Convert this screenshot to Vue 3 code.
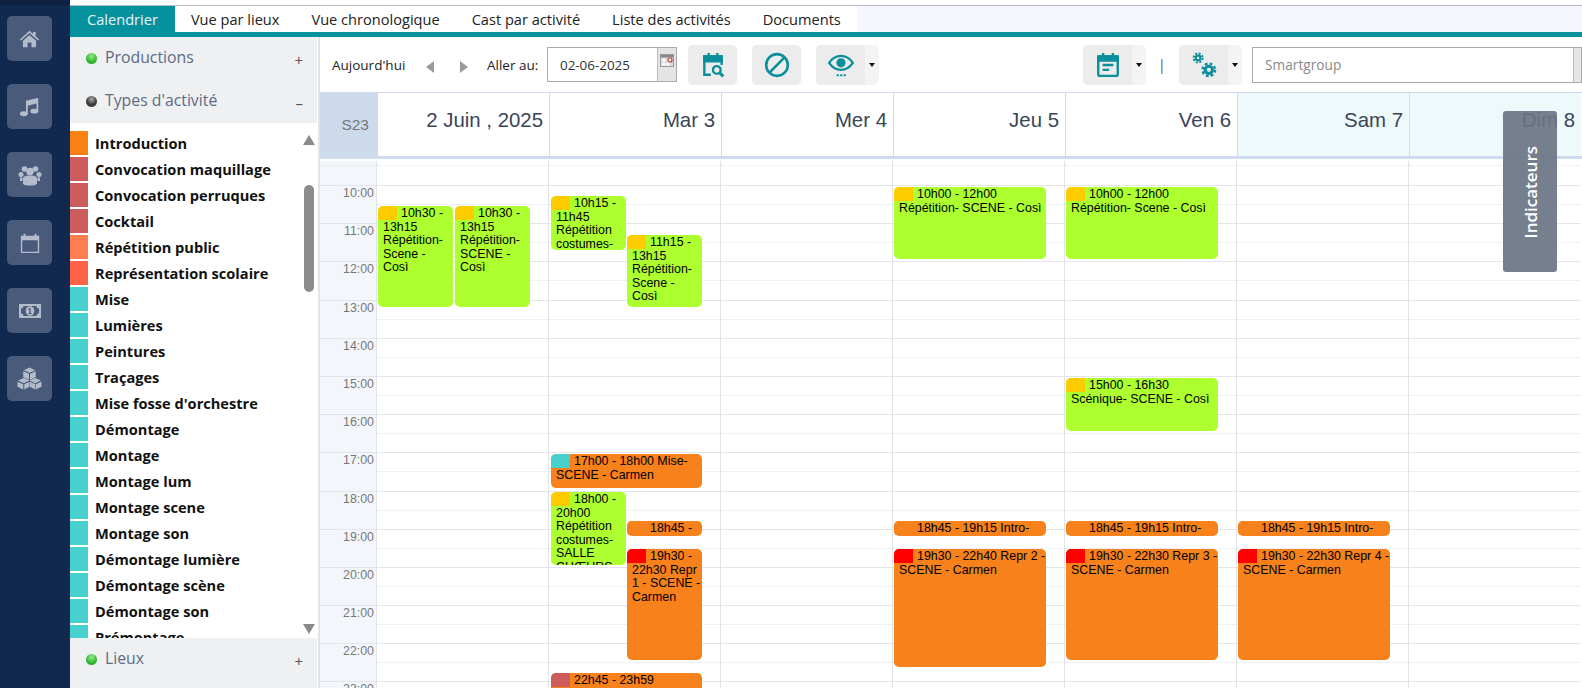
<script setup>
const navItems = ['home', 'music', 'users', 'calendar', 'money', 'cubes']
const types = [
  ['Introduction', '#f98012'], ['Convocation maquillage', '#cd5c5c'], ['Convocation perruques', '#cd5c5c'],
  ['Cocktail', '#cd5c5c'], ['Répétition public', '#ff7f50'], ['Représentation scolaire', '#ff6347'],
  ['Mise', '#48d1cc'], ['Lumières', '#48d1cc'], ['Peintures', '#48d1cc'], ['Traçages', '#48d1cc'],
  ["Mise fosse d'orchestre", '#48d1cc'], ['Démontage', '#48d1cc'], ['Montage', '#48d1cc'], ['Montage lum', '#48d1cc'],
  ['Montage scene', '#48d1cc'], ['Montage son', '#48d1cc'], ['Démontage lumière', '#48d1cc'],
  ['Démontage scène', '#48d1cc'], ['Démontage son', '#48d1cc'], ['Prémontage', '#48d1cc']
]
const tabs = ['Calendrier', 'Vue par lieux', 'Vue chronologique', 'Cast par activité', 'Liste des activités', 'Documents']
const days = [
  { label: '2 Juin , 2025' }, { label: 'Mar 3' }, { label: 'Mer 4' }, { label: 'Jeu 5' },
  { label: 'Ven 6' }, { label: 'Sam 7', off: true }, { label: 'Dim 8', off: true }
]
const hours = ['10:00','11:00','12:00','13:00','14:00','15:00','16:00','17:00','18:00','19:00','20:00','21:00','22:00','23:00']
const G = '#adff2f', O = '#f7811a', Y = '#ffcc00', R = '#ff0000', T = '#48d1cc', I = '#cd5c5c'
const BODY_TOP = 161
const evs = [
  [378, 453, 206, 307, G, Y, '10h30 - 13h15 Répétition- Scene - Così'],
  [455, 530, 206, 307, G, Y, '10h30 - 13h15 Répétition- SCENE - Così'],
  [551, 626, 196, 250, G, Y, '10h15 - 11h45 Répétition costumes- SALLE CHŒURS - Così'],
  [627, 702, 235, 307, G, Y, '11h15 - 13h15 Répétition- Scene - Così'],
  [551, 702, 454, 488, O, T, '17h00 - 18h00 Mise- SCENE - Carmen'],
  [551, 626, 492, 565, G, Y, '18h00 - 20h00 Répétition costumes- SALLE CHŒURS - Così'],
  [627, 702, 521, 536, O, O, '18h45 - 19h15 Intro- SCENE - Carmen'],
  [627, 702, 549, 660, O, R, '19h30 - 22h30 Repr 1 - SCENE - Carmen'],
  [551, 702, 673, 720, O, I, '22h45 - 23h59'],
  [894, 1046, 187, 259, G, Y, '10h00 - 12h00 Répétition- SCENE - Così'],
  [894, 1046, 521, 536, O, O, '18h45 - 19h15 Intro- SCENE - Carmen'],
  [894, 1046, 549, 667, O, R, '19h30 - 22h40 Repr 2 - SCENE - Carmen'],
  [1066, 1218, 187, 259, G, Y, '10h00 - 12h00 Répétition- Scene - Così'],
  [1066, 1218, 378, 431, G, Y, '15h00 - 16h30 Scénique- SCENE - Così'],
  [1066, 1218, 521, 536, O, O, '18h45 - 19h15 Intro- SCENE - Carmen'],
  [1066, 1218, 549, 660, O, R, '19h30 - 22h30 Repr 3 - SCENE - Carmen'],
  [1238, 1390, 521, 536, O, O, '18h45 - 19h15 Intro- SCENE - Carmen'],
  [1238, 1390, 549, 660, O, R, '19h30 - 22h30 Repr 4 - SCENE - Carmen']
].map(([l, r, t, b, bg, sw, text]) => ({
  box: { left: l - 320 + 'px', width: r - l + 'px', top: t - BODY_TOP + 'px', height: b - t + 'px', background: bg },
  sw: { background: sw },
  text
}))
</script>

<template>
  <div class="app">
    <nav class="nav">
      <div v-for="n in navItems" :key="n" class="nav-btn">
        <svg v-if="n === 'home'" viewBox="0 0 24 24" width="21" height="21"><path d="M12 3 1 13l1.300 1.400L12 5.800l9.700 8.600L23 13l-4-3.600V4.500h-3v2.300z"/><path d="M4.500 14.500 12 8l7.500 6.500V22h-5.300v-5.500H9.800V22H4.500z"/></svg>
        <svg v-else-if="n === 'music'" viewBox="0 0 24 24" width="21" height="21"><path d="M8 5.500 22 2v15h-2V8.500L10 11v9.500H8z"/><ellipse cx="5.500" cy="20.300" rx="4.500" ry="2.800"/><ellipse cx="17.500" cy="17.300" rx="4.500" ry="2.800"/></svg>
        <svg v-else-if="n === 'users'" viewBox="0 0 24 24" width="24" height="24"><circle cx="6.500" cy="6" r="2.800"/><circle cx="17.500" cy="6" r="2.800"/><circle cx="12" cy="8.500" r="3.800"/><circle cx="3" cy="11.500" r="2.500"/><circle cx="21" cy="11.500" r="2.500"/><path d="M5 15c1-2 3-2.500 7-2.500s6 .5 7 2.500v6c-1.500 1-4 1.500-7 1.500s-5.500-.5-7-1.500z"/><path d="M2 14.500h2.500V18H2zM19.500 14.500H22V18h-2.500z"/></svg>
        <svg v-else-if="n === 'calendar'" viewBox="0 0 24 24" width="22" height="22"><path fill-rule="evenodd" d="M2 4h3V2h2v2h10V2h2v2h3v19H2zm1.500 5v12.500h17V9z"/></svg>
        <svg v-else-if="n === 'money'" viewBox="0 0 24 24" width="24" height="24"><path d="M1 5h22v14H1z"/><path fill="#4a5a7b" d="M5.500 7a2.500 2.500 0 0 1-2.500 2.500v5A2.500 2.500 0 0 1 5.500 17h13a2.500 2.500 0 0 1 2.500-2.500v-5A2.500 2.500 0 0 1 18.500 7z"/><ellipse cx="12" cy="12" rx="4.300" ry="4.800"/><path fill="#4a5a7b" d="M11.300 9h1.300v5h1v1h-3.300v-1h1v-3.500l-1 .6v-1.100z"/></svg>
        <svg v-else viewBox="0 0 24 24" width="25" height="25"><path d="M12 1.500 17.500 4 12 6.500 6.500 4z"/><path d="M6 5l5.500 2.500v5.700L6 10.800z"/><path d="M18 5l-5.500 2.500v5.700l5.500-2.400z"/><path d="M6.500 11.500 12 14l-5.500 2.500L1 14z"/><path d="M.5 15l5.500 2.500v5L.5 20z"/><path d="M12 15l-5 2.500v5l5-2.500z"/><path d="M17.500 11.500 23 14l-5.500 2.500L12 14z"/><path d="M12.500 15l5 2.500v5l-5-2.500z"/><path d="M23.500 15l-5.500 2.500v5l5.500-2.500z"/></svg>
      </div>
    </nav>

    <div class="work">
      <div class="tabs">
        <div v-for="(t, i) in tabs" :key="t" class="tab" :class="{ active: i === 0 }">{{ t }}</div>
      </div>

      <div class="content">
        <aside class="side">
          <div class="head"><span class="dot green"></span><span class="head-label">Productions</span><span class="sign">+</span></div>
          <div class="head"><span class="dot black"></span><span class="head-label">Types d'activité</span><span class="sign">–</span></div>
          <div class="list">
            <div v-for="[name, color] in types" :key="name" class="item">
              <span class="swatch" :style="{ background: color }"></span>
              <span class="item-label">{{ name }}</span>
            </div>
            <span class="arrow-up"></span>
            <span class="thumb"></span>
            <span class="arrow-down"></span>
          </div>
          <div class="head last"><span class="dot green"></span><span class="head-label">Lieux</span><span class="sign">+</span></div>
        </aside>

        <main class="main">
          <div class="toolbar">
            <span class="today">Aujourd'hui</span>
            <span class="tri-left"></span>
            <span class="tri-right"></span>
            <span class="goto">Aller au:</span>
            <div class="date">
              <span class="date-value">02-06-2025</span>
              <span class="date-btn">
                <svg viewBox="0 0 14 13" width="14" height="13"><rect x=".5" y=".5" width="13" height="12" fill="#ddd" stroke="#999"/><rect x="1" y="1" width="12" height="2.500" fill="#888"/><rect x="2.500" y="5" width="3" height="2.500" fill="#fff"/><rect x="2.500" y="9" width="3" height="2.500" fill="#fff"/><rect x="6.500" y="9" width="3" height="2.500" fill="#fff"/><circle cx="10" cy="6" r="2" fill="#fff" stroke="#c0392b" stroke-width="1.200"/></svg>
              </span>
            </div>
            <button class="btn first">
              <svg viewBox="0 0 24 24" width="26" height="26" fill="none" stroke="#0b8f9b" stroke-width="2.200"><path d="M10 21H4V4h16v8"/><path d="M4 4h16v4.500H4z" fill="#0b8f9b"/><path d="M8 1v4M16 1v4"/><circle cx="15.500" cy="16.500" r="3.500"/><path d="m18 19 3.500 3.500" stroke-width="2.800"/></svg>
            </button>
            <button class="btn">
              <svg viewBox="0 0 24 24" width="26" height="26" fill="none" stroke="#0b8f9b" stroke-width="2.400"><circle cx="12" cy="12" r="10"/><path d="M5 19 19 5"/></svg>
            </button>
            <div class="split eye-split">
              <button class="btn">
                <svg viewBox="0 0 26 26" width="28" height="28" fill="none" stroke="#0b8f9b" stroke-width="2.200"><path d="M2 11c3-4.500 7-6.500 11-6.500S21 6.500 24 11c-3 4.500-7 6.500-11 6.500S5 15.500 2 11z"/><circle cx="13" cy="11" r="3.200" fill="#0b8f9b"/><path d="M9 22.500h2M12.200 22.500h2M15.400 22.500h2" stroke-width="1.800"/></svg>
              </button>
              <span class="caret-box"><i class="caret"></i></span>
            </div>
            <div class="split cal-split">
              <button class="btn">
                <svg viewBox="0 0 24 24" width="26" height="26" fill="none" stroke="#0b8f9b" stroke-width="2.200"><rect x="3" y="4" width="18" height="18" rx="1.500"/><path d="M3 4h18v4H3z" fill="#0b8f9b"/><path d="M7.500 1v4M16.500 1v4"/><path d="M7 12h10M7 16.500h6"/></svg>
              </button>
              <span class="caret-box"><i class="caret"></i></span>
            </div>
            <span class="sep">|</span>
            <div class="split gear-split">
              <button class="btn">
                <svg viewBox="0 0 26 26" width="28" height="28" fill="none" stroke="#0b8f9b"><circle cx="7.500" cy="6.500" r="2.200" stroke-width="2"/><circle cx="7.500" cy="6.500" r="4.200" stroke-width="1.800" stroke-dasharray="1.900 1.400"/><circle cx="17.500" cy="17.500" r="3.400" stroke-width="2.800"/><circle cx="17.500" cy="17.500" r="5.800" stroke-width="2.200" stroke-dasharray="2.600 1.950"/></svg>
              </button>
              <span class="caret-box"><i class="caret"></i></span>
            </div>
            <div class="smart"><span class="smart-text">Smartgroup</span><span class="smart-btn"></span></div>
          </div>

          <div class="cal-head">
            <div class="week">S23</div>
            <div v-for="d in days" :key="d.label" class="day-head" :class="{ off: d.off }">{{ d.label }}</div>
          </div>

          <div class="cal-body">
            <div class="col times">
              <div class="slot first"><div class="half"></div></div>
              <div v-for="h in hours" :key="h" class="slot"><span class="time">{{ h }}</span></div>
            </div>
            <div v-for="d in days" :key="d.label" class="col">
              <div class="slot first"><div class="half"></div></div>
              <div v-for="h in hours" :key="h" class="slot"><div class="half"></div></div>
            </div>
            <div v-for="(e, i) in evs" :key="i" class="event" :style="e.box">
              <span class="ev-sw" :style="e.sw"></span>{{ e.text }}
            </div>
          </div>

          <div class="indic"><span>Indicateurs</span></div>
        </main>
      </div>
    </div>
  </div>
</template>

<style>
html, body { margin: 0; overflow: hidden; background: #fff; }
</style>

<style scoped>
.app { display: flex; width: 1582px; height: 688px; overflow: hidden; font-family: "Open Sans", sans-serif; }

.nav { width: 70px; flex: none; background: #12294f; box-shadow: inset 0 5px 0 #0e2142; box-sizing: border-box; padding: 16px 7px 0; display: flex; flex-direction: column; gap: 23px; }
.nav-btn { width: 45px; height: 45px; border-radius: 5px; background: #4a5a7b; display: flex; align-items: center; justify-content: center; }
.nav-btn svg { fill: #b4bccb; }

.work { flex: 1; min-width: 0; display: flex; flex-direction: column; }
.tabs { margin-top: 5px; height: 32px; flex: none; box-sizing: border-box; display: flex; background: #f4f7fd; border-top: 1px solid #b4b8c2; border-bottom: 5px solid #06919e; }
.tab { background: #fff; color: #222; font-size: 14.600px; line-height: 26px; padding: 0 16px; white-space: nowrap; }
.tab.active { background: #06919e; color: #e9f6f7; padding: 0 17px; height: 31px; }

.content { flex: 1; min-height: 0; display: flex; }
.side { width: 247px; flex: none; display: flex; flex-direction: column; background: #eef0f2; margin-right: 3px; box-shadow: 1.500px 0 0 #fff, 2.500px 0 0 #c3c8d0; }
.head { height: 43px; flex: none; box-sizing: border-box; position: relative; display: flex; align-items: center; padding: 0 0 3px 16px; color: #5d6b85; font-size: 15.800px; }
.head.last { height: 50px; padding-bottom: 10px; }
.head-label { margin-left: 8px; }
.dot { width: 11px; height: 11px; border-radius: 50%; margin-top: 3px; }
.dot.green { background: radial-gradient(circle at 50% 30%, #9be88f, #2eb82e 60%, #23a023); }
.dot.black { background: radial-gradient(circle at 50% 30%, #aaa, #3a3a3a 55%, #444); }
.sign { margin-left: auto; margin-right: 14px; margin-top: 5px; color: #555; font-size: 15px; }
.list { flex: 1; min-height: 0; background: #fff; overflow: hidden; position: relative; padding-top: 8px; box-sizing: border-box; }
.item { height: 24px; margin-bottom: 2px; display: flex; align-items: center; }
.swatch { width: 18px; height: 24px; flex: none; }
.item-label { margin-left: 7px; font-size: 14.600px; font-weight: 700; color: #111; white-space: nowrap; }
.arrow-up, .arrow-down { position: absolute; left: 233px; width: 0; height: 0; border-left: 6px solid transparent; border-right: 6px solid transparent; }
.arrow-up { top: 12px; border-bottom: 10px solid #8a8a8a; }
.arrow-down { top: 501px; border-top: 10px solid #8a8a8a; }
.thumb { position: absolute; left: 234px; top: 62px; width: 10px; height: 107px; border-radius: 5px; background: #8c8c8c; }

.main { flex: 1; min-width: 0; position: relative; display: flex; flex-direction: column; }
.toolbar { height: 55px; flex: none; box-sizing: border-box; display: flex; align-items: center; padding: 0 0 0 12px; font-size: 13.500px; color: #222; background: #fff; }
.today { margin-top: 0; width: 73px; white-space: nowrap; }
.tri-left, .tri-right { width: 0; height: 0; margin-top: 4px; border-top: 6px solid transparent; border-bottom: 6px solid transparent; }
.tri-left { margin-left: 21px; border-right: 8px solid #9a9a9a; }
.tri-right { margin-left: 26px; border-left: 8px solid #9a9a9a; }
.goto { margin-left: 19px; width: 60px; white-space: nowrap; }
.date { width: 130px; height: 35px; box-sizing: border-box; border: 1px solid #aaa; display: flex; align-items: center; justify-content: space-between; }
.date-value { margin-left: 12px; font-size: 13.400px; color: #333; }
.date-btn { width: 18px; height: 33px; background: #e4e4e4; border-left: 1px solid #bbb; display: flex; align-items: center; justify-content: center; }
.date-btn svg { margin-top: -9px; }
.btn { width: 49px; height: 40px; border: 0; padding: 0; border-radius: 5px; background: #ececec; display: flex; align-items: center; justify-content: center; margin-left: 15px; }
.btn.first { margin-left: 11px; }
.split { display: flex; height: 40px; border-radius: 5px; background: #f4f4f4; }
.split .btn { margin-left: 0; border-radius: 5px 0 0 5px; }
.caret-box { width: 14px; display: flex; align-items: center; justify-content: center; }
.caret { width: 0; height: 0; border-left: 3.500px solid transparent; border-right: 3.500px solid transparent; border-top: 4px solid #111; }
.eye-split { margin-left: 15px; }
.cal-split { margin-left: 204px; }
.sep { margin-left: 12px; width: 21px; color: #555; font-size: 14px; }
.gear-split { margin-left: 0; }
.smart { margin-left: 10px; flex: 1; height: 36px; box-sizing: border-box; border: 1px solid #aaa; display: flex; justify-content: space-between; align-items: center; }
.smart-text { margin-left: 12px; color: #8a8a8a; font-size: 13.700px; }
.smart-btn { width: 7px; height: 100%; background: #e6e6e6; border-left: 1px solid #bbb; }

.cal-head { height: 67px; flex: none; box-sizing: border-box; display: grid; grid-template-columns: 57px repeat(7, 172px); border-top: 1px solid #cfdaec; border-bottom: 3px solid #cfdcf0; font-family: "Liberation Sans", Arial, sans-serif; }
.week { background: #ccdaec; color: #777; font-size: 15.500px; text-align: right; padding: 23px 8px 0 0; box-sizing: border-box; }
.day-head { border-left: 1px solid #cfdcf0; box-sizing: border-box; font-size: 20.400px; color: #3a4558; text-align: right; padding: 16px 6px 0 0; }
.day-head.off { background: #eef9fc; }

.cal-body { margin-top: 2px; flex: 1; min-height: 0; position: relative; overflow: hidden; display: grid; grid-template-columns: 57px repeat(7, 172px); font-family: "Liberation Sans", Arial, sans-serif; }
.col { border-left: 1px solid #e2e3e8; box-sizing: border-box; margin-left: -1px; }
.col.times { border-left: 0; margin-left: 0; background: #f3f7fc; }
.slot { height: 38.200px; box-sizing: border-box; border-top: 1px solid #e4e5ea; }
.slot.first { height: 24px; border-top: 0; }
.half { height: 18px; border-bottom: 1px dotted #e2e3e7; }
.slot.first .half { height: 4px; }
.time { display: block; text-align: right; padding: 0 3px 0 0; font-size: 12.400px; line-height: 14px; color: #777; }

.event { position: absolute; box-sizing: border-box; padding: 1px 0 0 5px; border-radius: 5px; overflow: hidden; font-size: 12.400px; line-height: 13.500px; color: #000; }
.ev-sw { float: left; width: 19px; height: 13.500px; margin: -1px 4px 0 -5px; }

.indic { position: absolute; left: 1183px; top: 74px; width: 54px; height: 161px; border-radius: 3px; background: rgba(106, 116, 132, .92); display: flex; align-items: center; justify-content: center; color: #fff; font-size: 17px; font-weight: 600; }
.indic span { writing-mode: vertical-rl; transform: rotate(180deg); margin-top: 2px; }
</style>
